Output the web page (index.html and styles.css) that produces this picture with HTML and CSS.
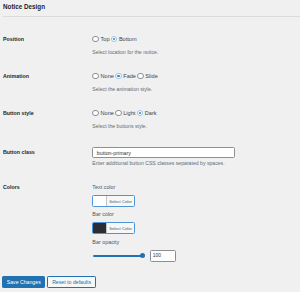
FILE: index.html
```html
<!DOCTYPE html>
<html>
<head>
<meta charset="utf-8">
<link rel="stylesheet" href="styles.css">
</head>
<body>
<div class="wrap">
  <h2 class="title">Notice Design</h2>
  <div class="form">
    <div class="row">
      <div class="label">Position</div>
      <div class="field">
        <div class="choices">
          <label class="choice"><span class="radio"></span>Top</label>
          <label class="choice"><span class="radio checked"></span>Bottom</label>
        </div>
        <p class="desc">Select location for the notice.</p>
      </div>
    </div>
    <div class="row">
      <div class="label">Animation</div>
      <div class="field">
        <div class="choices">
          <label class="choice"><span class="radio"></span>None</label>
          <label class="choice"><span class="radio checked"></span>Fade</label>
          <label class="choice"><span class="radio"></span>Slide</label>
        </div>
        <p class="desc">Select the animation style.</p>
      </div>
    </div>
    <div class="row">
      <div class="label">Button style</div>
      <div class="field">
        <div class="choices">
          <label class="choice"><span class="radio"></span>None</label>
          <label class="choice"><span class="radio"></span>Light</label>
          <label class="choice"><span class="radio checked"></span>Dark</label>
        </div>
        <p class="desc">Select the buttons style.</p>
      </div>
    </div>
    <div class="row">
      <div class="label label-input">Button class</div>
      <div class="field">
        <div class="text-input">button-primary</div>
        <p class="desc desc-tight">Enter additional button CSS classes separated by spaces.</p>
      </div>
    </div>
    <div class="row">
      <div class="label">Colors</div>
      <div class="field">
        <div class="sub-label">Text color</div>
        <div class="color-btn"><span class="swatch swatch-white"></span><span class="color-text">Select Color</span></div>
        <div class="sub-label sub-next">Bar color</div>
        <div class="color-btn"><span class="swatch swatch-dark"></span><span class="color-text">Select Color</span></div>
        <div class="sub-label sub-opacity">Bar opacity</div>
        <div class="opacity">
          <div class="range"><span class="track"></span><span class="thumb"></span></div>
          <div class="num-input">100</div>
        </div>
      </div>
    </div>
  </div>
  <div class="actions">
    <span class="btn btn-primary">Save Changes</span>
    <span class="btn btn-secondary">Reset to defaults</span>
  </div>
</div>
</body>
</html>
```
FILE: styles.css
```css
html, body {
  margin: 0;
  padding: 0;
  background: #f0f0f1;
}
body {
  font-family: "Liberation Sans", Arial, sans-serif;
  color: #3c434a;
}
.wrap {
  padding-left: 3px;
}
.title {
  margin: 0;
  padding: 2px 0 5px;
  font-size: 6.3px;
  line-height: 9px;
  font-weight: bold;
  color: #1d2327;
  border-bottom: 1px solid #dcdcde;
}
.form {
  padding-top: 9.5px;
}
.row {
  display: grid;
  grid-template-columns: 89.3px 1fr;
  padding: 9px 0;
}
.label {
  font-size: 5.3px;
  line-height: 7px;
  font-weight: bold;
  color: #1d2327;
}
.label-input {
  padding-top: 1.6px;
  line-height: 8px;
}
.choices {
  display: flex;
  align-items: center;
  gap: 1.2px;
  height: 7px;
}
.choice {
  display: inline-flex;
  align-items: center;
  font-size: 5.6px;
  line-height: 7px;
  color: #3c434a;
}
.radio {
  width: 4.6px;
  height: 4.6px;
  border: 0.8px solid #8c8f94;
  border-radius: 50%;
  background: #fff;
  margin-right: 1.6px;
  display: inline-flex;
  align-items: center;
  justify-content: center;
}
.radio.checked {
  border-color: #9ec2e6;
}
.radio.checked::before {
  content: "";
  width: 2.4px;
  height: 2.4px;
  border-radius: 50%;
  background: #3582c4;
}
.desc {
  margin: 6px 0 0;
  font-size: 5.15px;
  line-height: 6px;
  color: #646970;
}
.desc-tight {
  margin-top: 2px;
}
.text-input {
  box-sizing: border-box;
  width: 143px;
  height: 11.5px;
  border: 0.8px solid #8c8f94;
  border-radius: 1.5px;
  background: #fff;
  font-size: 5.3px;
  line-height: 10px;
  padding-left: 3.5px;
  color: #2c3338;
}
.sub-label {
  font-size: 5.4px;
  line-height: 7px;
  color: #50575e;
}
.sub-next {
  margin-top: 4px;
}
.sub-opacity {
  margin-top: 5px;
}
.color-btn {
  margin-top: 3.5px;
  box-sizing: border-box;
  display: flex;
  width: 43px;
  height: 12.5px;
  border: 0.8px solid #4f94d4;
  border-radius: 1.5px;
  background: #f6f7f7;
  overflow: hidden;
}
.swatch {
  width: 12.5px;
  height: 100%;
  border-right: 0.8px solid #c3c4c7;
}
.swatch-white {
  background: #fff;
}
.swatch-dark {
  background: #2c2e35;
}
.color-text {
  flex: 1;
  text-align: center;
  font-size: 4.2px;
  line-height: 11px;
  color: #50575e;
}
.opacity {
  display: flex;
  align-items: center;
  gap: 5px;
  margin-top: 4px;
}
.range {
  position: relative;
  width: 52px;
  height: 6px;
  margin-left: 0.7px;
}
.track {
  position: absolute;
  left: 0;
  right: 1px;
  top: 2px;
  height: 2px;
  border-radius: 1px;
  background: #2271b1;
}
.thumb {
  position: absolute;
  right: 0;
  top: 0.5px;
  width: 5px;
  height: 5px;
  border-radius: 50%;
  background: #2271b1;
}
.num-input {
  box-sizing: border-box;
  width: 26px;
  height: 11.7px;
  border: 0.8px solid #8c8f94;
  border-radius: 1.5px;
  background: #fff;
  font-size: 4.9px;
  line-height: 10px;
  padding-left: 1.8px;
  color: #2c3338;
}
.actions {
  display: flex;
  gap: 2px;
  padding-top: 5.7px;
  margin-left: -0.7px;
}
.btn {
  box-sizing: border-box;
  height: 11.6px;
  border: 0.8px solid #2271b1;
  border-radius: 1.2px;
  font-size: 5.2px;
  line-height: 10px;
  padding: 0 3.4px;
}
.btn-primary {
  background: #2271b1;
  color: #fff;
}
.btn-secondary {
  background: #f6f7f7;
  color: #2271b1;
  padding: 0 4px;
}
```
